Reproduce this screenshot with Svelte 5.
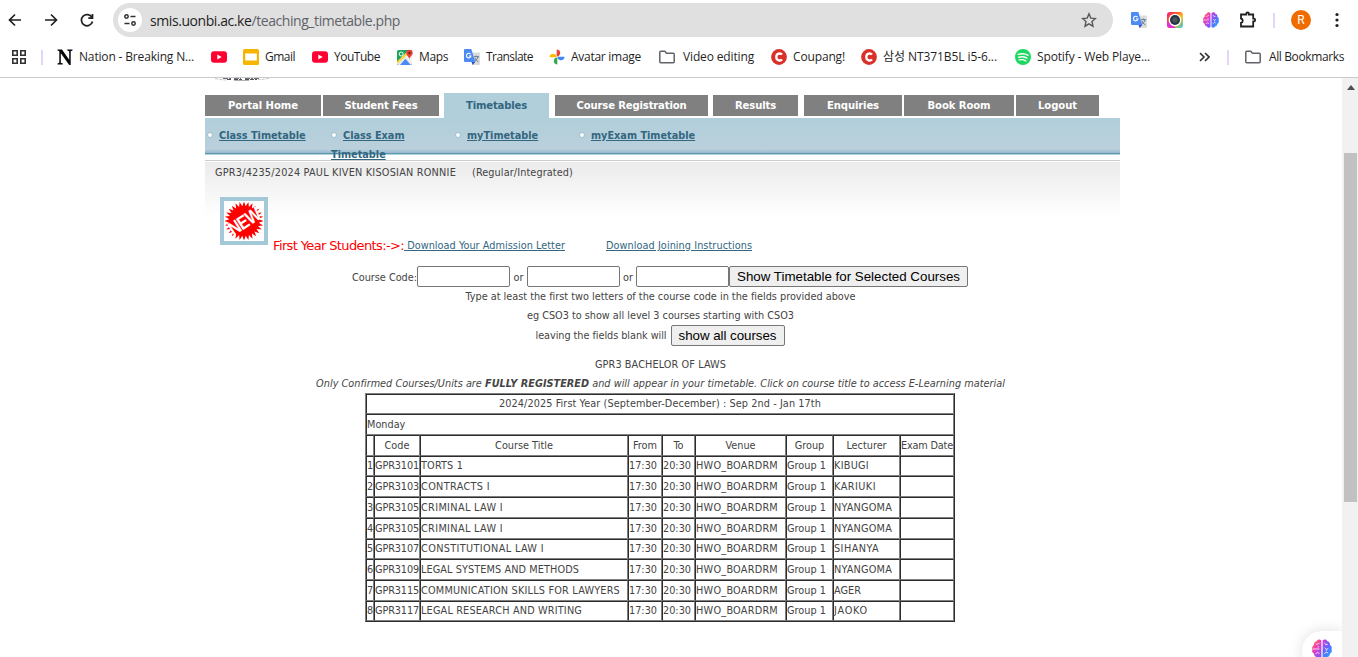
<script>
  const bookmarks = [
    { icon: 'nation', label: 'Nation - Breaking N...', w: 154, t: 115 },
    { icon: 'youtube', label: '', w: 32, t: 0 },
    { icon: 'slides', label: 'Gmail', w: 69, t: 30 },
    { icon: 'youtube', label: 'YouTube', w: 85, t: 46 },
    { icon: 'maps', label: 'Maps', w: 67, t: 29 },
    { icon: 'translate', label: 'Translate', w: 85, t: 47 },
    { icon: 'photos', label: 'Avatar image', w: 110, t: 70 },
    { icon: 'folder', label: 'Video editing', w: 112, t: 71 },
    { icon: 'coupang', label: 'Coupang!', w: 90, t: 52 },
    { icon: 'coupang', label: '삼성 NT371B5L i5-6...', w: 154, t: 114 },
    { icon: 'spotify', label: 'Spotify - Web Playe...', w: 183, t: 113 }
  ];
  const tabs = [
    { label: 'Portal Home', w: 116, gap: 2, t: 70 },
    { label: 'Student Fees', w: 116, gap: 5, t: 73 },
    { label: 'Timetables', w: 105, gap: 6, t: 61, active: true },
    { label: 'Course Registration', w: 153, gap: 5, t: 110 },
    { label: 'Results', w: 85, gap: 6, t: 41 },
    { label: 'Enquiries', w: 98, gap: 2, t: 52 },
    { label: 'Book Room', w: 110, gap: 2, t: 63 },
    { label: 'Logout', w: 83, gap: 0, t: 39 }
  ];
  const links = ['Class Timetable', 'Class Exam Timetable', 'myTimetable', 'myExam Timetable'];
  const heads = ['', 'Code', 'Course Title', 'From', 'To', 'Venue', 'Group', 'Lecturer', 'Exam Date'];
  const cols = [8, 46, 208, 34, 33, 91, 47, 67, 54];
  const courses = [
    ['GPR3101', 'TORTS 1', 'KIBUGI', 42, 35],
    ['GPR3103', 'CONTRACTS I', 'KARIUKI', 69, 42],
    ['GPR3105', 'CRIMINAL LAW I', 'NYANGOMA', 82, 58],
    ['GPR3105', 'CRIMINAL LAW I', 'NYANGOMA', 82, 58],
    ['GPR3107', 'CONSTITUTIONAL LAW I', 'SIHANYA', 123, 45],
    ['GPR3109', 'LEGAL SYSTEMS AND METHODS', 'NYANGOMA', 158, 58],
    ['GPR3115', 'COMMUNICATION SKILLS FOR LAWYERS', 'AGER', 199, 27],
    ['GPR3117', 'LEGAL RESEARCH AND WRITING', 'JAOKO', 161, 34]
  ];
  const burst = Array.from({ length: 56 }, (_, i) => {
    const r = i % 2 ? 14.8 : 19.6;
    const a = (i * Math.PI) / 28;
    return `${(20 + r * Math.cos(a)).toFixed(1)},${(20 + r * Math.sin(a)).toFixed(1)}`;
  }).join(' ');

  function fit(node, width) {
    if (!width) return;
    const natural = node.getBoundingClientRect().width;
    node.style.letterSpacing = `${(width - natural) / node.textContent.length}px`;
  }
</script>

{#snippet brain(size)}
  <svg width={size} height={size} viewBox="0 0 16 16">
    <defs>
      <linearGradient id="bl" x1="0" y1="0" x2=".6" y2="1"><stop offset="0" stop-color="#ff9328" /><stop offset=".45" stop-color="#f43dae" /><stop offset="1" stop-color="#8a50ff" /></linearGradient>
      <linearGradient id="br" x1="0" y1="0" x2=".6" y2="1"><stop offset="0" stop-color="#d03ce0" /><stop offset=".5" stop-color="#6a60fa" /><stop offset="1" stop-color="#22a6ff" /></linearGradient>
    </defs>
    <path fill="url(#bl)" d="M7.5 1.2C6.5-.1 4.2.1 3.8 1.7 2.2 1.8 1.3 3.2 1.7 4.7.3 5.3-.2 7 .4 8.300c-.7 1.300-.1 3 1.300 3.500-.1 1.500 1 2.700 2.400 2.700.6 1.400 2.500 1.700 3.400.5z" />
    <path fill="url(#br)" d="M8.500 1.200c1-1.300 3.300-1.100 3.700.5 1.600.1 2.500 1.500 2.100 3 1.400.6 1.900 2.300 1.300 3.600.7 1.300.1 3-1.300 3.500.1 1.500-1 2.700-2.400 2.700-.6 1.400-2.500 1.700-3.400.5z" />
    <path d="M3.300 4.300 5 4l1-1M.8 8H6M3 11.800l1.500-1 1.500.8M5 5.800v1M10 3l1 1.600 1.600-.4M10 7l1.500 1.300L13 7.500M9.800 12l1.500-1.600 1.500.7M11.500 8.300v1.200" fill="none" stroke="#fff" stroke-opacity=".8" stroke-width=".8" />
  </svg>
{/snippet}

{#snippet icon(name)}
  {#if name === 'nation'}
    <svg width="16" height="16" viewBox="0 0 16 16"><path d="M.5.500H5l7.200 10.200V2.200L10.300 1.500V.500H15.500v1L13.700 2.200V16h-1.500L3.800 4.200V13.800l2 .8v1H.5v-1l1.800-.8V2.200L.5 1.500z" fill="#080808" /></svg>
  {:else if name === 'youtube'}
    <svg width="16" height="16" viewBox="0 0 16 16"><rect y="2.300" width="16" height="11.400" rx="3" fill="#ff0033" /><path d="M6.300 5.500v5L10.700 8z" fill="#fff" /></svg>
  {:else if name === 'slides'}
    <svg width="16" height="16" viewBox="0 0 16 16"><rect width="16" height="16" rx="1.500" fill="#f6b500" /><path d="M2.200 4.500h11.600v7H2.200z" fill="#fff" /></svg>
  {:else if name === 'maps'}
    <svg width="16" height="16" viewBox="0 0 16 16"><rect y="1" width="15" height="15" rx="1.500" fill="#1da55a" /><path d="M0 13 11 2.200 15 6v8.500L13.500 16H1.500L0 14.500z" fill="#e9e9e9" /><path d="m8 8 7 7V8l-3.500-3.500z" fill="#f2f2f2" /><path d="M3 16 8.500 9.700 13.700 16z" fill="#4a8af4" /><path d="m0 14 11-10.500" stroke="#ffd33b" stroke-width="2" /><circle cx="4.200" cy="5" r="2" fill="none" stroke="#fff" stroke-width="1" /><path d="M12.300 10.500c0-2.700-3-3.700-3-6.500a3.100 3.100 0 0 1 6.400 0c0 2.800-3.400 3.800-3.400 6.500z" fill="#e54236" /><circle cx="12.500" cy="4" r="1.200" fill="#8b1a14" /></svg>
  {:else if name === 'translate'}
    <svg width="16" height="16" viewBox="0 0 16 16"><path d="M5 3.500h10a1 1 0 0 1 1 1V15a1 1 0 0 1-1 1H8.700z" fill="#dcdcdc" /><path d="M1 0h6.300l4 13H1a1 1 0 0 1-1-1V1a1 1 0 0 1 1-1z" fill="#4c8bf5" /><path d="m7.500 13 3.800 0L8.600 16z" fill="#2a56c6" /><path d="M6.600 5.200A2.300 2.300 0 1 0 7 7H4.900" fill="none" stroke="#fff" stroke-width="1.100" /><path d="M10 7.700h5M12.300 6.500v1.200M14 7.700c-.5 2.300-2 3.700-3.500 4.800M10.800 9c.8 1.800 2 2.900 3.600 3.900" fill="none" stroke="#607988" stroke-width="1" /></svg>
  {:else if name === 'photos'}
    <svg width="16" height="16" viewBox="0 0 16 16"><path d="M7.700.500C9.800.500 11.200 2 11.200 4c0 1.300-.7 2.500-1.800 3.200L7.700 7.500z" fill="#ea4335" /><path d="M15.500 7.700c0 2.100-1.500 3.500-3.500 3.500-1.300 0-2.500-.7-3.200-1.800L8.500 7.700z" fill="#4285f4" /><path d="M8.300 15.500c-2.100 0-3.500-1.500-3.500-3.500 0-1.300.7-2.500 1.800-3.200l1.700-.3z" fill="#34a853" /><path d="M.5 8.300c0-2.100 1.500-3.500 3.500-3.500 1.300 0 2.500.7 3.200 1.800l.3 1.700z" fill="#fbbc04" /></svg>
  {:else if name === 'folder'}
    <svg width="16" height="16" viewBox="0 0 16 16"><path d="M.8 3.300q0-1 1-1h4l1.700 1.900h6.700q1 0 1 1v7.500q0 1-1 1H1.800q-1 0-1-1z" fill="none" stroke="#5f6368" stroke-width="1.500" /></svg>
  {:else if name === 'coupang'}
    <svg width="16" height="16" viewBox="0 0 16 16"><circle cx="8" cy="8" r="7.900" fill="#d9302a" /><path d="M11 5.700C9.600 3.700 5.300 4.100 5.300 8s4.300 4.300 5.700 2.300" fill="none" stroke="#fff" stroke-width="2.300" /></svg>
  {:else if name === 'spotify'}
    <svg width="16" height="16" viewBox="0 0 16 16"><circle cx="8" cy="8" r="8" fill="#1ed760" /><path d="M3.200 5.300c3.500-1 7-.6 9.800.9M3.700 8.200c3-.8 5.700-.5 8.200.9M4.200 10.900c2.500-.6 4.500-.3 6.600.9" fill="none" stroke="#fff" stroke-width="1.400" stroke-linecap="round" /></svg>
  {/if}
{/snippet}

<div class="window">
  <header class="toolbar">
    <svg class="nav" width="14" height="14" viewBox="0 0 14 14"><path d="M13 7H2M7 1.500 1.500 7 7 12.500" /></svg>
    <svg class="nav fwd" width="14" height="14" viewBox="0 0 14 14"><path d="M1 7h11M7 1.500 12.500 7 7 12.500" /></svg>
    <svg class="nav reload" width="14" height="14" viewBox="0 0 14 14"><path d="M12 4.500A5.600 5.600 0 1 0 12.500 8.500M12.500 1v4.200H8.300" /></svg>
    <div class="omnibox">
      <span class="site"><svg width="14" height="14" viewBox="0 0 14 14"><circle cx="3.500" cy="3.500" r="1.700" /><path d="M7.500 3.500h5M1.500 10.500h5" /><circle cx="10.500" cy="10.500" r="1.700" /></svg></span>
      <span class="url"><span use:fit={250}><b>smis.uonbi.ac.ke</b>/teaching_timetable.php</span></span>
      <svg class="star" width="16" height="16" viewBox="0 0 16 16"><path d="m8 1.800 1.800 4.300 4.700.4-3.500 3.100 1 4.600L8 11.800l-4 2.400 1-4.600L1.500 6.500l4.700-.4z" /></svg>
    </div>
    <div class="extensions">
      {@render icon('translate')}
      <svg width="16" height="16" viewBox="0 0 16 16"><defs><linearGradient id="cam" x1="0" y1="0" x2="1" y2="1"><stop offset="0" stop-color="#f0208a" /><stop offset=".3" stop-color="#ff4a28" /><stop offset=".6" stop-color="#ffc020" /><stop offset="1" stop-color="#20c8e0" /></linearGradient></defs><rect width="16" height="16" rx="3" fill="url(#cam)" /><path d="M0 9v4a3 3 0 0 0 3 3h6" fill="#e02fd0" /><circle cx="8" cy="8" r="6.300" fill="#fff" /><circle cx="8" cy="8" r="5" fill="#263640" /><circle cx="8" cy="8" r="2.700" fill="#48545b" /></svg>
      {@render brain(16)}
      <svg class="puzzle" width="18" height="18" viewBox="0 0 18 18"><path d="M2 3.500h5.300v-.7a1.300 1.300 0 0 1 2.600 0v.7h4.300v4.200h.6a1.400 1.400 0 0 1 0 2.800h-.6v5H2v-3.700a2.200 2.200 0 0 0 0-4.300z" /></svg>
    </div>
    <i class="rule"></i>
    <span class="avatar">R</span>
    <svg class="dots" width="4" height="16" viewBox="0 0 4 16"><circle cx="2" cy="2.500" r="1.600" /><circle cx="2" cy="8" r="1.600" /><circle cx="2" cy="13.500" r="1.600" /></svg>
  </header>

  <nav class="bookmarks">
    <svg class="apps" width="14" height="14" viewBox="0 0 14 14"><path d="M.8.800h4.400v4.400H.8zM8.800.800h4.400v4.400H8.800zM.8 8.800h4.400v4.400H.8zM8.800 8.800h4.400v4.400H8.800z" /></svg>
    <i class="rule"></i>
    {#each bookmarks as b}
      <div class="bookmark" style:width="{b.w}px">{@render icon(b.icon)}<span class:wide={b.icon === 'folder'} use:fit={b.t}>{b.label}</span></div>
    {/each}
    <svg class="more" width="11" height="10" viewBox="0 0 11 10"><path d="m1 1 4 4-4 4M6 1l4 4-4 4" /></svg>
    <i class="rule"></i>
    <div class="bookmark all">{@render icon('folder')}<span class="wide" use:fit={75}>All Bookmarks</span></div>
  </nav>

  <div class="viewport">
    <main>
      <svg class="crest" width="60" height="4" viewBox="0 0 60 4"><path d="M2 .5q7 1.500 12 1.500M45 1.500q5 0 11-1.200" fill="none" stroke="#c4c4c4" stroke-dasharray="3 1" /><path d="M10 .5h8m3 0h7m4 0h14" stroke="#77717a" stroke-dasharray="5 1 2 1" /><path d="M14 1.500h5m2 0h8m3 0h12" stroke="#565059" stroke-dasharray="4 1" /><path d="M21 2.500h15" stroke="#b0b0b0" /></svg>
      <div class="tabs">
        {#each tabs as t}
          <div class="tab" class:active={t.active} style:width="{t.w}px" style:margin-right="{t.gap}px"><span use:fit={t.t}>{t.label}</span></div>
        {/each}
      </div>
      <ul class="subnav">
        {#each links as l}<li><a href="#top">{l}</a></li>{/each}
      </ul>
      <section class="content">
        <p class="student"><span use:fit={241}>GPR3/4235/2024 PAUL KIVEN KISOSIAN RONNIE</span><span use:fit={101}>(Regular/Integrated)</span></p>
        <div class="notice">
          <svg class="new" width="40" height="40" viewBox="0 0 40 40"><polygon points={burst} fill="#f00" /><g transform="rotate(-33 20 20) translate(20 27) scale(.82 1)"><text text-anchor="middle">NEW</text></g></svg>
          <span class="first" use:fit={131}>First Year Students:-&gt;:</span><a class="letter" href="#top"><span use:fit={161}>&nbsp;Download Your Admission Letter</span></a><a href="#top" class="join"><span use:fit={146}>Download Joining Instructions</span></a>
        </div>
        <form class="search" onsubmit={(e) => e.preventDefault()}>
          <span class="cc"><span use:fit={65}>Course Code:</span></span><input aria-label="First" /><span class="or">or</span><input aria-label="Second" /><span class="or second">or</span><input aria-label="Third" /><button class="selected"><span use:fit={223}>Show Timetable for Selected Courses</span></button>
        </form>
        <p><span use:fit={390}>Type at least the first two letters of the course code in the fields provided above</span></p>
        <p><span use:fit={267}>eg CSO3 to show all level 3 courses starting with CSO3</span></p>
        <p class="blank"><span use:fit={131}>leaving the fields blank will</span><button><span use:fit={98}>show all courses</span></button></p>
        <p class="degree"><span use:fit={131}>GPR3 BACHELOR OF LAWS</span></p>
        <p class="confirm"><em use:fit={689}>Only Confirmed Courses/Units are <b>FULLY REGISTERED</b> and will appear in your timetable. Click on course title to access E-Learning material</em></p>
        <table>
          <colgroup>{#each cols as c}<col style:width="{c}px" />{/each}</colgroup>
          <tbody>
            <tr><td colspan="9" class="c"><span use:fit={322}>2024/2025 First Year (September-December) : Sep 2nd - Jan 17th</span></td></tr>
            <tr><td colspan="9">Monday</td></tr>
            <tr>{#each heads as h, i}<td class="c"><span use:fit={i === 8 ? 52 : 0}>{h}</span></td>{/each}</tr>
            {#each courses as [code, title, lecturer, tw, lw], i}
              <tr><td>{i + 1}</td><td><span use:fit={44}>{code}</span></td><td><span use:fit={tw}>{title}</span></td><td>17:30</td><td>20:30</td><td><span use:fit={82}>HWO_BOARDRM</span></td><td>Group 1</td><td><span use:fit={lw}>{lecturer}</span></td><td></td></tr>
            {/each}
          </tbody>
        </table>
      </section>
    </main>
    <aside class="scroll"><svg width="8" height="5" viewBox="0 0 8 5"><path d="M0 5 4 0l4 5z" fill="#505050" /></svg><i></i></aside>
    <div class="bubble">{@render brain(20)}</div>
  </div>
</div>

<style>
  :global(body) { margin: 0; background: #fff; }
  .window { width: 1358px; height: 657px; overflow: hidden; display: flex; flex-direction: column; font: 12px 'Open Sans', 'Noto Sans CJK KR', sans-serif; color: #1f1f1f; }
  svg { display: block; flex: none; }
  span, em { white-space: nowrap; }
  .toolbar { height: 40px; flex: none; display: flex; align-items: center; box-sizing: border-box; padding-left: 8px; }
  .nav { fill: none; stroke: #202124; stroke-width: 1.700; }
  .fwd { margin-left: 22px; }
  .reload { margin-left: 22px; }
  .omnibox { display: flex; align-items: center; width: 1000px; height: 34px; box-sizing: border-box; margin-left: 19px; padding: 0 16px 0 5px; background: #e0e0e0; border-radius: 17px; }
  .site { width: 24px; height: 24px; border-radius: 50%; background: #fff; display: grid; place-items: center; }
  .site svg { fill: none; stroke: #303134; stroke-width: 1.500; }
  .url { flex: 1; margin-left: 8px; font-size: 14px; color: #5f6368; }
  .url b { font-weight: 400; color: #1f1f1f; }
  .star { fill: none; stroke: #55585c; stroke-width: 1.400; }
  .extensions { display: flex; align-items: center; gap: 20px; margin-left: 18px; }
  .puzzle { fill: none; stroke: #202124; stroke-width: 1.800; }
  .rule { width: 2px; height: 15px; background: #e6d5fb; flex: none; }
  .toolbar .rule { margin-left: 16px; }
  .avatar { width: 20px; height: 20px; margin-left: 16px; border-radius: 50%; background: #ef6c00; color: #fff; font: 12px/20px Roboto, sans-serif; text-align: center; }
  .dots { margin-left: 24px; fill: #202124; }
  .bookmarks { height: 37px; flex: none; display: flex; align-items: center; box-sizing: border-box; height: 38px; padding: 0 0 3px 12px; border-bottom: 1px solid #cacaca; }
  .apps { fill: none; stroke: #303134; stroke-width: 1.600; margin-right: 15px; }
  .bookmarks > .rule { margin-right: 14px; }
  .bookmark { display: flex; align-items: center; gap: 6px; flex: none; line-height: 18px; }
  .bookmark .wide { margin-left: 2px; }
  .more { fill: none; stroke: #303134; stroke-width: 1.600; margin-right: 17px; margin-left: 1px; }
  .bookmarks > .rule:nth-last-child(2) { margin-right: 16px; }
  .viewport { position: relative; display: flex; flex: 1; min-height: 0; overflow: hidden; font: 10.800px/19px 'DejaVu Sans Condensed', 'DejaVu Sans', sans-serif; font-stretch: condensed; color: #444; }
  main { width: 915px; padding-left: 205px; flex: none; }
  .crest { margin-left: 8px; }
  .tabs { display: flex; height: 25px; margin-top: 11px; align-items: flex-start; }
  .tab { height: 21px; margin-top: 2px; background: #808080; color: #fff; font-weight: 700; font-size: 11.200px; text-align: center; line-height: 22px; }
  .tab.active { height: 25px; margin-top: 0; background: #b0cfdb; color: #336680; line-height: 26px; }
  .subnav { display: flex; margin: 0; padding: 0; list-style: none; height: 37px; background: linear-gradient(#b0cfda, #bad0dc 31px, #96b9cf 35px, #6095ab 35px, #6095ab 36px, #add3df 36px); }
  .subnav li { width: 110px; margin-right: 12px; padding: 8px 0 0 2px; height: 40px; line-height: 19px; font-weight: 700; }
  .subnav li:last-child { width: 140px; }
  .subnav li::before { content: ''; display: inline-block; border-radius: 50%; background: #fff; border: 1px solid #9dbfce; box-sizing: border-box; width: 6px; height: 6px; margin: 0 6px 2px 0; vertical-align: middle; }
  a { color: #336680; text-decoration: underline; }
  .content { margin-top: 5px; height: 490px; border-top: 1px solid #ccc; background: linear-gradient(#fff 1px, #ebebeb 1px, #fff 56px); }
  p { margin: 0; height: 19px; display: flex; justify-content: center; padding-right: 4px; }
  .student { justify-content: flex-start; padding: 2px 0 0 10px; gap: 16px; }
  .notice { display: flex; align-items: flex-end; height: 63px; margin-top: 10px; padding-left: 15px; }
  .new { border: 4px solid #a3c8d8; background: #fff; margin: 0 5px 10px 0; }
  .new text { font: 700 19px 'Liberation Sans Narrow', 'Liberation Sans', sans-serif; fill: #fff; letter-spacing: -1px; }
  .first { font: 13px/19px 'DejaVu Sans', sans-serif; color: #f00; }
  .letter { margin-right: 41px; }
  .search { display: flex; align-items: center; margin: 11px 0 0 147px; height: 21px; }
  .cc { width: 65px; }
  .search > span { padding-top: 1px; }
  input { width: 93px; height: 21px; box-sizing: border-box; border: 1px solid #767676; border-radius: 2px; padding: 0; background: #fff; }
  .or { width: 17px; text-align: center; }
  .or.second { width: 16px; }
  button { height: 21px; box-sizing: border-box; border: 1px solid #767676; border-radius: 2px; background: #efefef; padding: 0 7px; color: #000; font: 13.333px/19px 'Liberation Sans', sans-serif; }
  .blank { align-items: center; height: 21px; gap: 4px; padding-right: 5px; }
  .blank button { margin-top: -1px; }
  .degree { margin-top: 9px; }
  table { width: 590px; margin: 0 0 0 160px; table-layout: fixed; border-spacing: 0; border: 1px solid; border-color: #808080 #2c2c2c #2c2c2c #808080; line-height: 18px; }
  td { padding: 0; border: 1px solid; border-color: #2c2c2c #808080 #808080 #2c2c2c; white-space: nowrap; }
  tr { height: 21px; }
  tr:nth-child(1), tr:nth-child(4), tr:nth-child(8), tr:nth-child(11) { height: 20px; }
  .c { text-align: center; }
  .scroll { margin-left: auto; width: 16px; background: #f1f1f1; }
  .scroll svg { margin: 7px 0 0 5px; }
  .scroll i { display: block; width: 13px; height: 349px; margin: 63px 0 0 2px; background: #c1c1c1; }
  .bubble { position: absolute; left: 1302px; top: 553px; width: 40px; height: 40px; box-sizing: border-box; padding: 8px 0 0 10px; border-radius: 20px 0 0 20px; background: #fff; box-shadow: 0 0 14px #0002; clip-path: inset(-40px 0 0 -40px); }
</style>
